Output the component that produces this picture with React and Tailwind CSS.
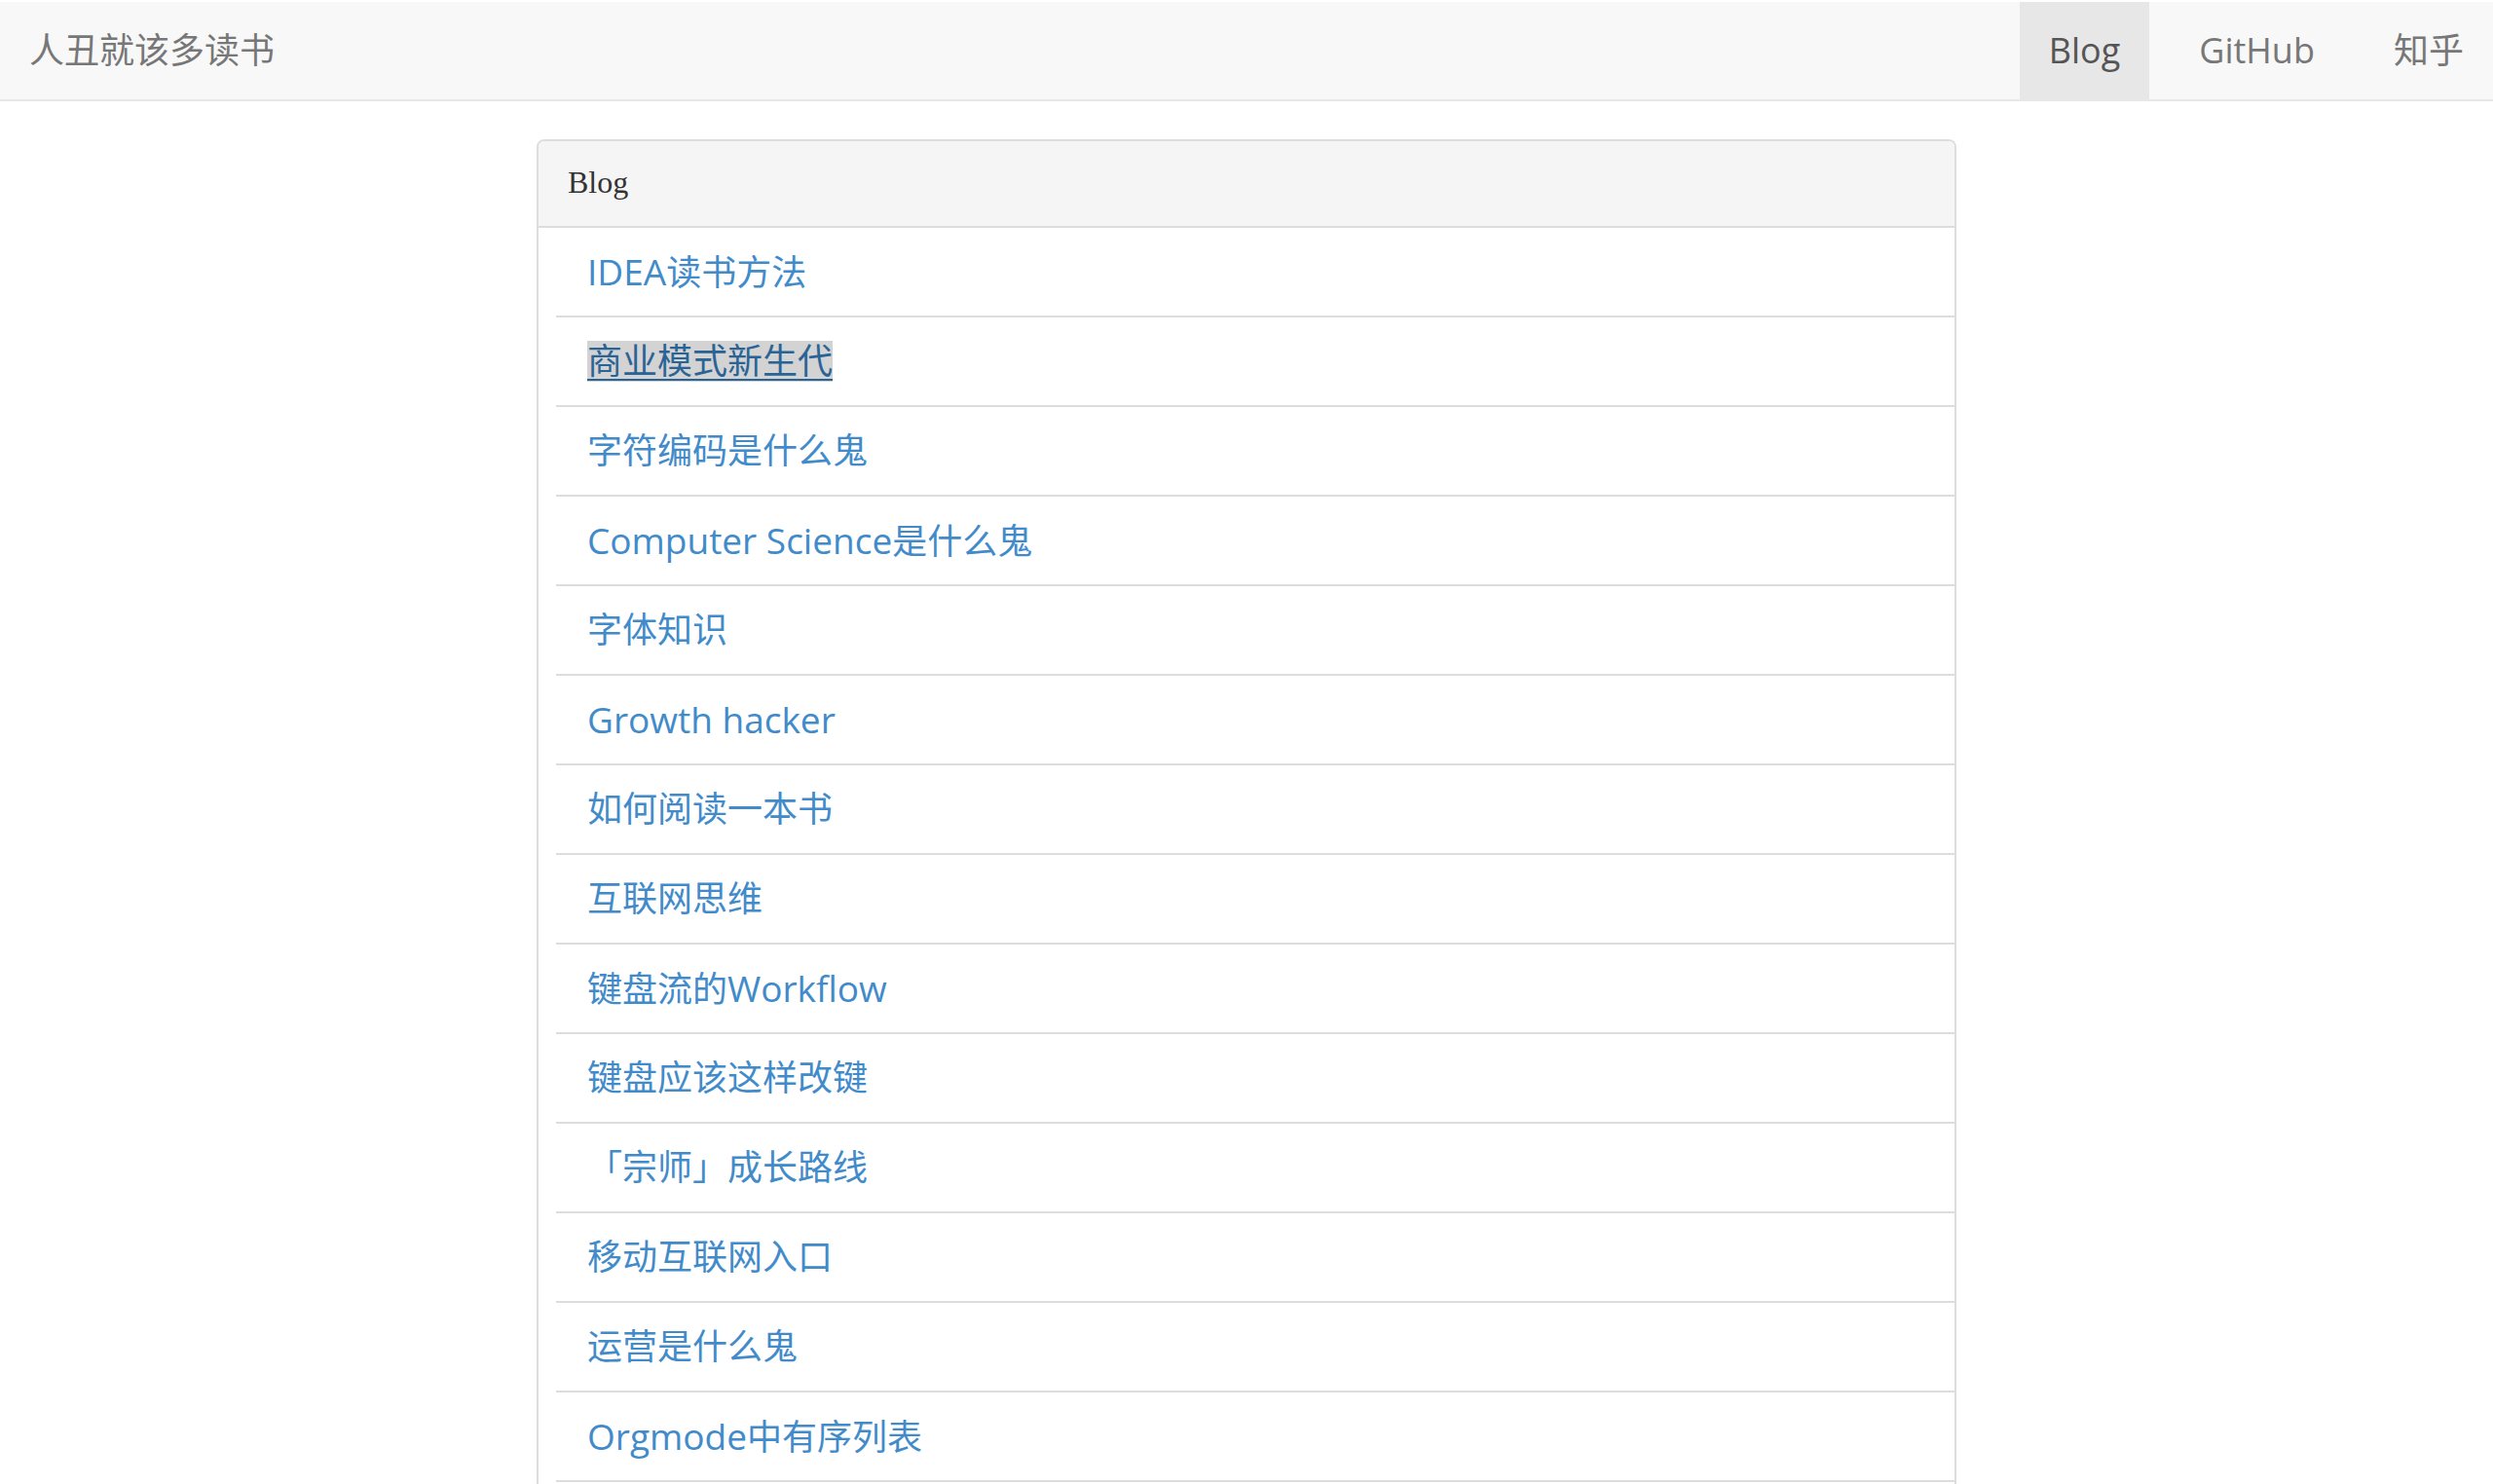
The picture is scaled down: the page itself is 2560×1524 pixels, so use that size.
import React from "react";

const posts = [
  "IDEA读书方法",
  "商业模式新生代",
  "字符编码是什么鬼",
  "Computer Science是什么鬼",
  "字体知识",
  "Growth hacker",
  "如何阅读一本书",
  "互联网思维",
  "键盘流的Workflow",
  "键盘应该这样改键",
  "「宗师」成长路线",
  "移动互联网入口",
  "运营是什么鬼",
  "Orgmode中有序列表",
];

function Title({ text }) {
  const parts = text.split(/([A-Za-z][A-Za-z ]*)/).filter((p) => p.length > 0);
  return (
    <>
      {parts.map((p, i) =>
        /^[A-Za-z]/.test(p) ? (
          <span key={i} className="text-[37px]">
            {p}
          </span>
        ) : (
          <span key={i}>{p}</span>
        )
      )}
    </>
  );
}

export default function App() {
  const sans = { fontFamily: '"Open Sans", "Noto Sans CJK SC", sans-serif' };
  return (
    <div className="min-h-screen bg-white" style={sans}>
      <div className="border-t-2 border-white">
        <nav className="flex h-[102px] items-stretch justify-between border-b-2 border-[#e7e7e7] bg-[#f8f8f8]">
          <a className="flex items-center pl-[30px] text-[36px] text-[#777777]">人丑就该多读书</a>
          <ul className="flex items-stretch gap-[21px] text-[36px]">
            <li className="flex items-center bg-[#e7e7e7] px-[30px] text-[#555555]">Blog</li>
            <li className="flex items-center px-[30px] text-[#777777]">GitHub</li>
            <li className="flex items-center px-[30px] text-[#777777]">知乎</li>
          </ul>
        </nav>
      </div>

      <div className="flex justify-center pt-[39px]">
        <div className="w-[1458px] rounded-t-[8px] border-2 border-b-0 border-[#dddddd]">
          <div
            className="flex h-[89px] items-center rounded-t-[6px] border-b-2 border-[#dddddd] bg-[#f5f5f5] pb-[3px] pl-[30px] text-[32px] text-[#333333]"
            style={{ fontFamily: '"Liberation Serif", "Times New Roman", serif' }}
          >
            Blog
          </div>
          <ul className="ml-[18px] pb-[120px]">
            {posts.map((t, i) => (
              <li
                key={t}
                className="flex h-[92px] items-center border-b-2 border-[#dddddd] pl-[32px] text-[36px] text-[#428bca]"
              >
                {i === 1 ? (
                  <a className="inline-block h-[42px] bg-[#d3d3d3] leading-[42px] text-[#2a6496] underline decoration-2 underline-offset-[5px]">
                    <Title text={t} />
                  </a>
                ) : (
                  <a className="leading-[42px]">
                    <Title text={t} />
                  </a>
                )}
              </li>
            ))}
          </ul>
        </div>
      </div>
    </div>
  );
}
